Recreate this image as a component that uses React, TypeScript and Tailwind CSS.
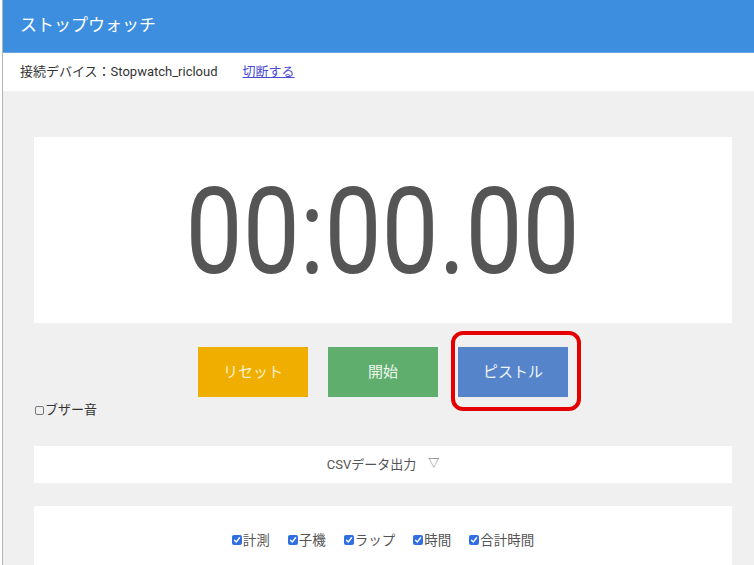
import React from "react";

const font = { fontFamily: 'Roboto, "Noto Sans CJK JP", sans-serif' };

function Checked() {
  return (
    <span className="inline-flex items-center justify-center w-[10px] h-[10px] rounded-[2px] bg-[#2f6fe0] mr-[1px]">
      <svg width="8" height="8" viewBox="0 0 8 8">
        <path d="M1.5 4.2 L3.3 6 L6.6 1.8" stroke="white" strokeWidth="1.4" fill="none" strokeLinecap="round" strokeLinejoin="round" />
      </svg>
    </span>
  );
}

export default function App() {
  const items = ["計測", "子機", "ラップ", "時間", "合計時間"];
  return (
    <div className="w-[754px] h-[565px] overflow-hidden bg-white pl-[2px]" style={font}>
      <div className="h-full border-l border-[#b4b4b4] flex flex-col">
        <div className="shrink-0 h-[53px] bg-[#3d8ede] border-b border-[#6aa8e8] flex items-center pl-[17px]">
          <span className="text-white text-[17px]">ストップウォッチ</span>
        </div>
        <div className="shrink-0 h-[38px] bg-white flex items-center pl-[17px] text-[13px] text-[#333]">
          <span>接続デバイス：Stopwatch_ricloud</span>
          <span className="ml-[25px] text-[#4a4ad6] underline">切断する</span>
        </div>
        <div className="flex-1 bg-[#f0f0f0] pl-[31px] pr-[22px] pt-[46px]">
          <div className="h-[186px] bg-white flex items-center justify-center">
            <span className="inline-block text-[121px] leading-none text-[#555] scale-x-[0.84] tracking-[0px] mt-[4px]">
              00:00.00
            </span>
          </div>
          <div className="mt-[24px] flex justify-center gap-[20px]">
            <div className="w-[110px] h-[50px] bg-[#f0ae00] flex items-center justify-center text-[15px] text-[#fff3cc]">
              リセット
            </div>
            <div className="w-[110px] h-[50px] bg-[#5fae6e] flex items-center justify-center text-[15px] text-[#eef7ee]">
              開始
            </div>
            <div className="relative w-[110px] h-[50px] bg-[#5584cb] flex items-center justify-center text-[15px] text-[#eef3fb]">
              ピストル
              <div className="absolute left-[-7px] top-[-16px] w-[130px] h-[80px] border-[4px] border-[#e50000] rounded-[12px]" />
            </div>
          </div>
          <div className="mt-[5px] h-[16px] flex items-center text-[13px] text-[#333] pl-[1px]">
            <span className="inline-block w-[9px] h-[9px] border border-[#777] rounded-[2px] mr-[1px]" />
            <span>ブザー音</span>
          </div>
          <div className="mt-[28px] h-[37px] bg-white flex items-center justify-center text-[13px] text-[#555]">
            <span>CSVデータ出力</span>
            <span className="ml-[12px] text-[11px]">▽</span>
          </div>
          <div className="mt-[23px] h-[100px] bg-white flex justify-center pt-[26px]">
            <div className="flex gap-[18px] h-[16px] items-center text-[13.5px] text-[#555]">
              {items.map((t) => (
                <span key={t} className="flex items-center">
                  <Checked />
                  {t}
                </span>
              ))}
            </div>
          </div>
        </div>
      </div>
    </div>
  );
}
